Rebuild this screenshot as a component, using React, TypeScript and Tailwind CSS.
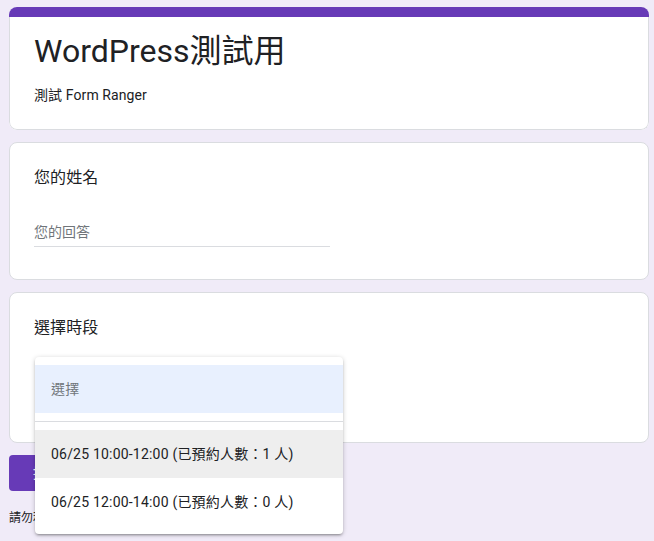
import React from "react";

export default function App() {
  return (
    <div className="min-h-screen bg-[#f0ebf8] pt-[7px] pl-[9px] font-['Roboto','Noto_Sans_CJK_TC',sans-serif] text-[#202124]">
      <div className="w-[640px] flex flex-col gap-3">
        {/* Header card */}
        <div className="rounded-lg overflow-hidden bg-white">
          <div className="h-[10px] bg-[#673ab7]" />
          <div className="border border-t-0 border-[#dadce0] rounded-b-lg px-6 pt-[14px] pb-6">
            <div className="text-[32px] leading-[40px]">WordPress測試用</div>
            <div className="mt-[14px] text-[14px] leading-5 tracking-[0.1px]">測試 Form Ranger</div>
          </div>
        </div>

        {/* Name card */}
        <div className="rounded-lg bg-white border border-[#dadce0] px-6 pt-[23px] pb-8">
          <div className="text-[16px] leading-6 tracking-[0.1px]">您的姓名</div>
          <div className="mt-8 w-[296px] border-b border-[#dadce0] pb-1">
            <div className="text-[14px] leading-5 text-[#70757a]">您的回答</div>
          </div>
        </div>

        {/* Select card */}
        <div className="relative rounded-lg bg-white border border-[#dadce0] px-6 pt-[23px]">
          <div className="text-[16px] leading-6 tracking-[0.1px]">選擇時段</div>
          <div className="h-[102px]" />
          <div className="absolute left-[25px] top-[64px] w-[308px] rounded bg-white py-2 shadow-[0_2px_2px_0_rgba(0,0,0,0.14),0_3px_1px_-2px_rgba(0,0,0,0.12),0_1px_5px_0_rgba(0,0,0,0.2)] z-10">
            <div className="h-12 flex items-center px-4 bg-[#e8f0fe] text-[14px] text-[#70757a] tracking-[0.2px]">選擇</div>
            <div className="my-2 h-px bg-[#dadce0]" />
            <div className="h-12 flex items-center px-4 bg-[#eeeeee] text-[14px] tracking-[0.2px] whitespace-nowrap">06/25 10:00-12:00 (已預約人數：1 人)</div>
            <div className="h-12 flex items-center px-4 text-[14px] tracking-[0.2px] whitespace-nowrap">06/25 12:00-14:00 (已預約人數：0 人)</div>
          </div>
        </div>

        {/* Submit */}
        <div>
          <button className="h-9 px-6 rounded bg-[#673ab7] text-white text-[14px] font-medium tracking-[0.25px]">提交</button>
          <div className="mt-[19px] text-[12px] leading-4 text-[#202124]">請勿利用 Google 表單提交密碼。</div>
        </div>
      </div>
    </div>
  );
}
